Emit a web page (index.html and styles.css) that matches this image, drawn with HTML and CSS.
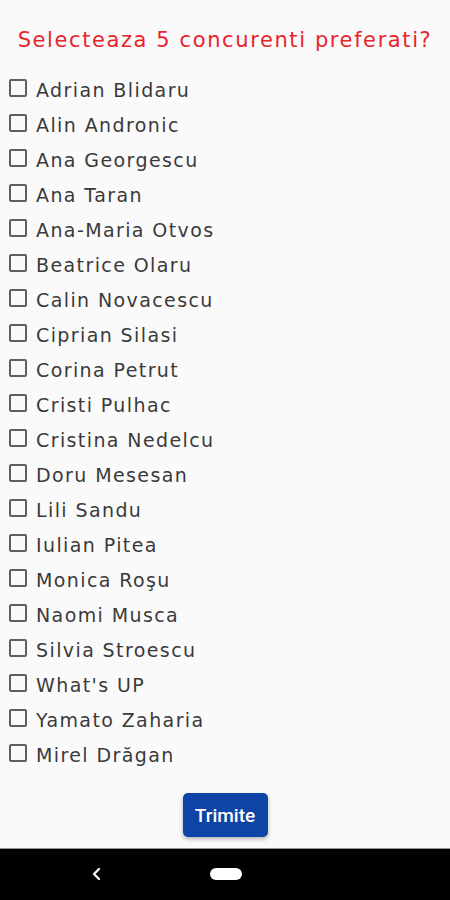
FILE: index.html
```html
<!DOCTYPE html>
<html>
<head>
<meta charset="utf-8">
<link rel="stylesheet" href="styles.css">
</head>
<body>
<div class="screen">
  <main class="content">
    <h1 class="title">Selecteaza 5 concurenti preferati?</h1>
    <ul class="list">
      <li class="item"><span class="box"></span><span class="name">Adrian Blidaru</span></li>
      <li class="item"><span class="box"></span><span class="name">Alin Andronic</span></li>
      <li class="item"><span class="box"></span><span class="name">Ana Georgescu</span></li>
      <li class="item"><span class="box"></span><span class="name">Ana Taran</span></li>
      <li class="item"><span class="box"></span><span class="name">Ana-Maria Otvos</span></li>
      <li class="item"><span class="box"></span><span class="name">Beatrice Olaru</span></li>
      <li class="item"><span class="box"></span><span class="name">Calin Novacescu</span></li>
      <li class="item"><span class="box"></span><span class="name">Ciprian Silasi</span></li>
      <li class="item"><span class="box"></span><span class="name">Corina Petrut</span></li>
      <li class="item"><span class="box"></span><span class="name">Cristi Pulhac</span></li>
      <li class="item"><span class="box"></span><span class="name">Cristina Nedelcu</span></li>
      <li class="item"><span class="box"></span><span class="name">Doru Mesesan</span></li>
      <li class="item"><span class="box"></span><span class="name">Lili Sandu</span></li>
      <li class="item"><span class="box"></span><span class="name">Iulian Pitea</span></li>
      <li class="item"><span class="box"></span><span class="name">Monica Roşu</span></li>
      <li class="item"><span class="box"></span><span class="name">Naomi Musca</span></li>
      <li class="item"><span class="box"></span><span class="name">Silvia Stroescu</span></li>
      <li class="item"><span class="box"></span><span class="name">What's UP</span></li>
      <li class="item"><span class="box"></span><span class="name">Yamato Zaharia</span></li>
      <li class="item"><span class="box"></span><span class="name">Mirel Drăgan</span></li>
    </ul>
    <div class="actions"><button class="btn">Trimite</button></div>
  </main>
  <nav class="navbar">
    <svg class="back" width="12" height="14" viewBox="0 0 12 14"><path d="M8 2 L3 7 L8 12" fill="none" stroke="#fff" stroke-width="2.2" stroke-linecap="round" stroke-linejoin="round"/></svg>
    <span class="home"></span>
  </nav>
</div>
</body>
</html>
```

FILE: styles.css
```css
* { box-sizing: border-box; }
html, body { margin: 0; padding: 0; }
body { background: #fafafa; font-family: "DejaVu Sans", sans-serif; }
.screen { width: 450px; height: 900px; display: flex; flex-direction: column; overflow: hidden; }
.content { flex: 1; display: flex; flex-direction: column; }
.title {
  margin: 0;
  padding-top: 28px;
  height: 72px;
  text-align: center;
  font-family: "DejaVu Sans", sans-serif;
  font-weight: normal;
  font-size: 21px;
  letter-spacing: 1.6px;
  color: #e8242b;
}
.list { list-style: none; margin: 0; padding: 0 0 0 9px; }
.item { height: 35px; display: flex; align-items: center; }
.box {
  width: 18px; height: 18px;
  border: 2px solid #5f5f5f;
  border-radius: 2px;
  margin-right: 9px;
  margin-top: -3px;
}
.name { font-size: 19px; color: #3a3a3a; letter-spacing: 1.4px; }
.actions { display: flex; justify-content: center; padding-top: 21px; }
.btn {
  width: 85px; height: 44px;
  border: none; border-radius: 5px;
  background: #0e44a6;
  color: #fff;
  font-family: Roboto, sans-serif;
  font-weight: 500;
  font-size: 19px;
  box-shadow: 0 2px 4px rgba(0,0,0,0.3);
}
.navbar {
  height: 52px; background: #000;
  border-top: 1px solid #999;
  display: flex; align-items: center; position: relative;
}
.back { position: absolute; left: 91px; top: 18px; }
.home { position: absolute; left: 210px; top: 19px; width: 32px; height: 12px; border-radius: 6px; background: #fff; }
```
